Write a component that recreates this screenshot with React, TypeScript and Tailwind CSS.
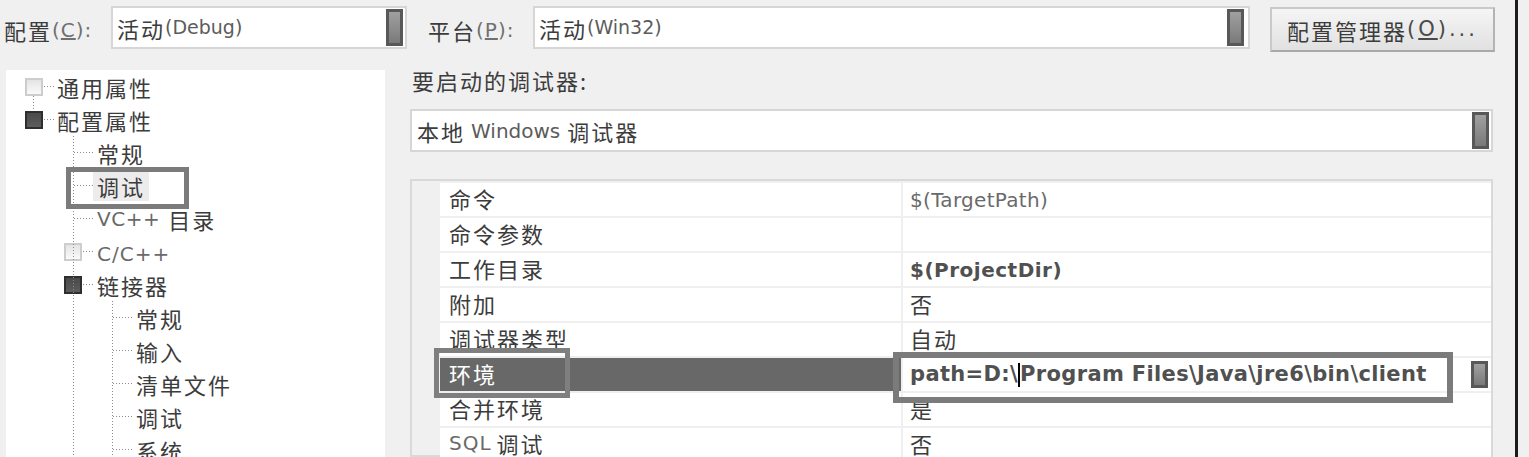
import React from "react";

const CJK = "font-['Noto_Sans_CJK_SC',sans-serif] text-[22px] tracking-[2px] leading-none";
const LAT = "font-['DejaVu_Sans',sans-serif] leading-none";

function DropBtn({ className = "" }: { className?: string }) {
  return (
    <div
      className={`w-[17px] shrink-0 border-[3px] border-[#585858] bg-linear-to-b from-[#a0a0a0] to-[#7a7a7a] ${className}`}
    />
  );
}

function ExpandBox({ open }: { open?: boolean }) {
  return open ? (
    <div className="w-[18px] h-[18px] shrink-0 border-2 border-[#2e2e2e] bg-linear-to-b from-[#4a4a4a] to-[#5c5c5c]" />
  ) : (
    <div className="w-[18px] h-[18px] shrink-0 border-2 border-[#cdcdcd] bg-linear-to-b from-[#e4e4e4] to-[#fafafa]" />
  );
}

type TreeItem = { label: React.ReactNode; level: 0 | 1 | 2; box?: "open" | "closed"; selected?: boolean };

const tree: TreeItem[] = [
  { label: "通用属性", level: 0, box: "closed" },
  { label: "配置属性", level: 0, box: "open" },
  { label: "常规", level: 1 },
  { label: "调试", level: 1, selected: true },
  {
    label: (
      <>
        <span className={`${LAT} text-[20px] tracking-[0.5px] text-[#6a6a6a] mr-[8px]`}>VC++</span>目录
      </>
    ),
    level: 1,
  },
  {
    label: <span className={`${LAT} text-[20px] tracking-[1px] text-[#6a6a6a]`}>C/C++</span>,
    level: 1,
    box: "closed",
  },
  { label: "链接器", level: 1, box: "open" },
  { label: "常规", level: 2 },
  { label: "输入", level: 2 },
  { label: "清单文件", level: 2 },
  { label: "调试", level: 2 },
  { label: "系统", level: 2 },
];

function TreeRow({ item }: { item: TreeItem }) {
  let pad = "pl-[130px]";
  if (item.level === 0) pad = "pl-[19px] gap-[14px]";
  else if (item.level === 1 && item.box) pad = "pl-[58px] gap-[15px]";
  else if (item.level === 1) pad = "pl-[87px]";
  return (
    <div className={`h-[33px] flex items-center ${pad}`}>
      {item.box && <ExpandBox open={item.box === "open"} />}
      <div
        className={`${CJK} text-[#3c3c3c] whitespace-nowrap ${
          item.level === 1 && !item.box ? "px-[4px] h-[30px] flex items-center" : ""
        } ${item.selected ? "bg-[#ececec]" : ""}`}
      >
        {item.label}
      </div>
    </div>
  );
}

function TreeLines() {
  const dots = { stroke: "#8c8c8c", strokeWidth: 1, strokeDasharray: "1 2" };
  const l2 = [7, 8, 9, 10, 11];
  const y = (i: number) => 16.5 + 33 * i;
  return (
    <svg className="absolute inset-0 pointer-events-none" width="379" height="400">
      <line x1="27.5" y1="26" x2="27.5" y2="41" {...dots} />
      <line x1="38" y1={y(0)} x2="50" y2={y(0)} {...dots} />
      <line x1="38" y1={y(1)} x2="50" y2={y(1)} {...dots} />
      <line x1="67.5" y1="66" x2="67.5" y2="400" {...dots} />
      {[2, 3, 4].map((i) => (
        <line key={i} x1="68" y1={y(i)} x2="87" y2={y(i)} {...dots} />
      ))}
      {[5, 6].map((i) => (
        <line key={i} x1="77" y1={y(i)} x2="89" y2={y(i)} {...dots} />
      ))}
      <line x1="106.5" y1="231" x2="106.5" y2="400" {...dots} />
      {l2.map((i) => (
        <line key={i} x1="107" y1={y(i)} x2="126" y2={y(i)} {...dots} />
      ))}
    </svg>
  );
}

type Row = { name: React.ReactNode; value?: React.ReactNode; env?: boolean };

const rows: Row[] = [
  {
    name: "命令",
    value: <span className={`${LAT} text-[20px] tracking-[0.3px] text-[#6a6a6a]`}>$(TargetPath)</span>,
  },
  { name: "命令参数" },
  {
    name: "工作目录",
    value: <span className={`${LAT} text-[20px] tracking-[0.5px] font-bold text-[#505050]`}>$(ProjectDir)</span>,
  },
  { name: "附加", value: "否" },
  { name: "调试器类型", value: "自动" },
  { name: "环境", env: true },
  { name: "合并环境", value: "是" },
  {
    name: (
      <>
        <span className={`${LAT} text-[20px] tracking-[1px] text-[#6a6a6a] mr-[5px]`}>SQL</span>调试
      </>
    ),
    value: "否",
  },
];

export default function App() {
  return (
    <div className="w-[1529px] h-[457px] overflow-hidden bg-[#f0f0f0] flex">
      <div className="w-[1515px] shrink-0 flex flex-col">
        {/* top bar */}
        <div className="h-[58px] shrink-0 flex items-start">
          <div className={`${CJK} text-[#3c3c3c] w-[107px] ml-[4px] mt-[19px] flex items-center`}>
            配置
            <span className={`${LAT} text-[20px] tracking-[1px] text-[#707070]`}>
              (<span className="underline">C</span>):
            </span>
          </div>
          <div className="mt-[6px] w-[296px] h-[43px] border-2 border-[#d6d6d6] bg-white flex items-center pl-[4px] pr-[2px]">
            <span className={`${CJK} text-[#3c3c3c]`}>活动</span>
            <span className={`${LAT} text-[19px] tracking-[0px] text-[#5c5c5c]`}>(Debug)</span>
            <DropBtn className="ml-auto h-[37px]" />
          </div>
          <div className={`${CJK} text-[#3c3c3c] w-[105px] ml-[21px] mt-[19px] flex items-center`}>
            平台
            <span className={`${LAT} text-[20px] tracking-[1px] text-[#707070]`}>
              (<span className="underline">P</span>):
            </span>
          </div>
          <div className="mt-[6px] w-[717px] h-[43px] border-2 border-[#d6d6d6] bg-white flex items-center pl-[4px] pr-[4px]">
            <span className={`${CJK} text-[#3c3c3c]`}>活动</span>
            <span className={`${LAT} text-[19px] tracking-[0px] text-[#5c5c5c]`}>(Win32)</span>
            <DropBtn className="ml-auto h-[37px]" />
          </div>
          <button className="ml-[20px] mt-[7px] w-[225px] h-[45px] border-2 border-[#c9c9c9] border-b-[#a9a9a9] border-r-[#b4b4b4] bg-linear-to-b from-[#f5f5f5] to-[#e1e1e1] flex items-center pl-[15px]">
            <span className={`${CJK} text-[#3c3c3c]`}>配置管理器</span>
            <span className={`${LAT} text-[21px] tracking-[3px] text-[#4a4a4a]`}>
              (<span className="underline">O</span>)...
            </span>
          </button>
        </div>

        {/* body */}
        <div className="flex flex-1 min-h-0">
          {/* tree */}
          <div className="relative ml-[6px] mt-[12px] w-[379px] bg-white">
            <TreeLines />
            {tree.map((item, i) => (
              <TreeRow key={i} item={item} />
            ))}
            <div className="absolute left-[60px] top-[97px] w-[123px] h-[42px] border-[5px] border-[#7b7b7b]" />
          </div>

          {/* right panel */}
          <div className="ml-[25px] w-[1083px] flex flex-col">
            <div className={`${CJK} text-[#3c3c3c] h-[44px] shrink-0 flex items-center pl-[2px]`}>
              要启动的调试器:
            </div>
            <div className="mt-[7px] h-[43px] shrink-0 border-2 border-[#d6d6d6] bg-white flex items-center pl-[5px] pr-[2px]">
              <span className={`${CJK} text-[#3c3c3c] mr-[6px]`}>本地</span>
              <span className={`${LAT} text-[20px] tracking-[0px] text-[#5c5c5c] mr-[7px]`}>Windows</span>
              <span className={`${CJK} text-[#3c3c3c]`}>调试器</span>
              <DropBtn className="ml-auto h-[37px]" />
            </div>

            {/* property grid */}
            <div className="relative mt-[27px] flex-1 min-h-0 border-2 border-[#d9d9d9] bg-[#f0f0f0] flex">
              <div className="w-[28px] shrink-0" />
              <div className="flex-1 pt-[2px] flex flex-col">
                {rows.map((r, i) => (
                  <div key={i} className="h-[35px] shrink-0 flex border-b-2 border-[#efefef]">
                    <div
                      className={`w-[461px] shrink-0 flex items-center pl-[9px] pb-[3px] ${CJK} ${
                        r.env ? "bg-[#686868] text-white" : "bg-white text-[#3c3c3c]"
                      }`}
                    >
                      {r.name}
                    </div>
                    <div className="flex-1 border-l-2 border-[#efefef] bg-white flex items-center pl-[7px] pr-[3px]">
                      {r.env ? (
                        <>
                          <span
                            className={`${LAT} text-[21px] tracking-[0.35px] font-bold text-[#505050] flex items-center whitespace-pre`}
                          >
                            path=D:\
                            <span className="inline-block w-[2px] h-[24px] bg-black" />
                            Program Files\Java\jre6\bin\client
                          </span>
                          <DropBtn className="ml-auto h-[27px] w-[16px]" />
                        </>
                      ) : (
                        <span className={`${CJK} text-[#3c3c3c] pb-[3px]`}>{r.value}</span>
                      )}
                    </div>
                  </div>
                ))}
              </div>
              <div className="absolute left-[22px] top-[167px] w-[136px] h-[50px] border-[5px] border-[#7f7f7f]" />
              <div className="absolute left-[481px] top-[171px] w-[560px] h-[51px] border-[6px] border-[#7b7b7b]" />
            </div>
          </div>
        </div>
      </div>
      <div className="w-[3px] shrink-0 bg-[#1c1c1c]" />
    </div>
  );
}
